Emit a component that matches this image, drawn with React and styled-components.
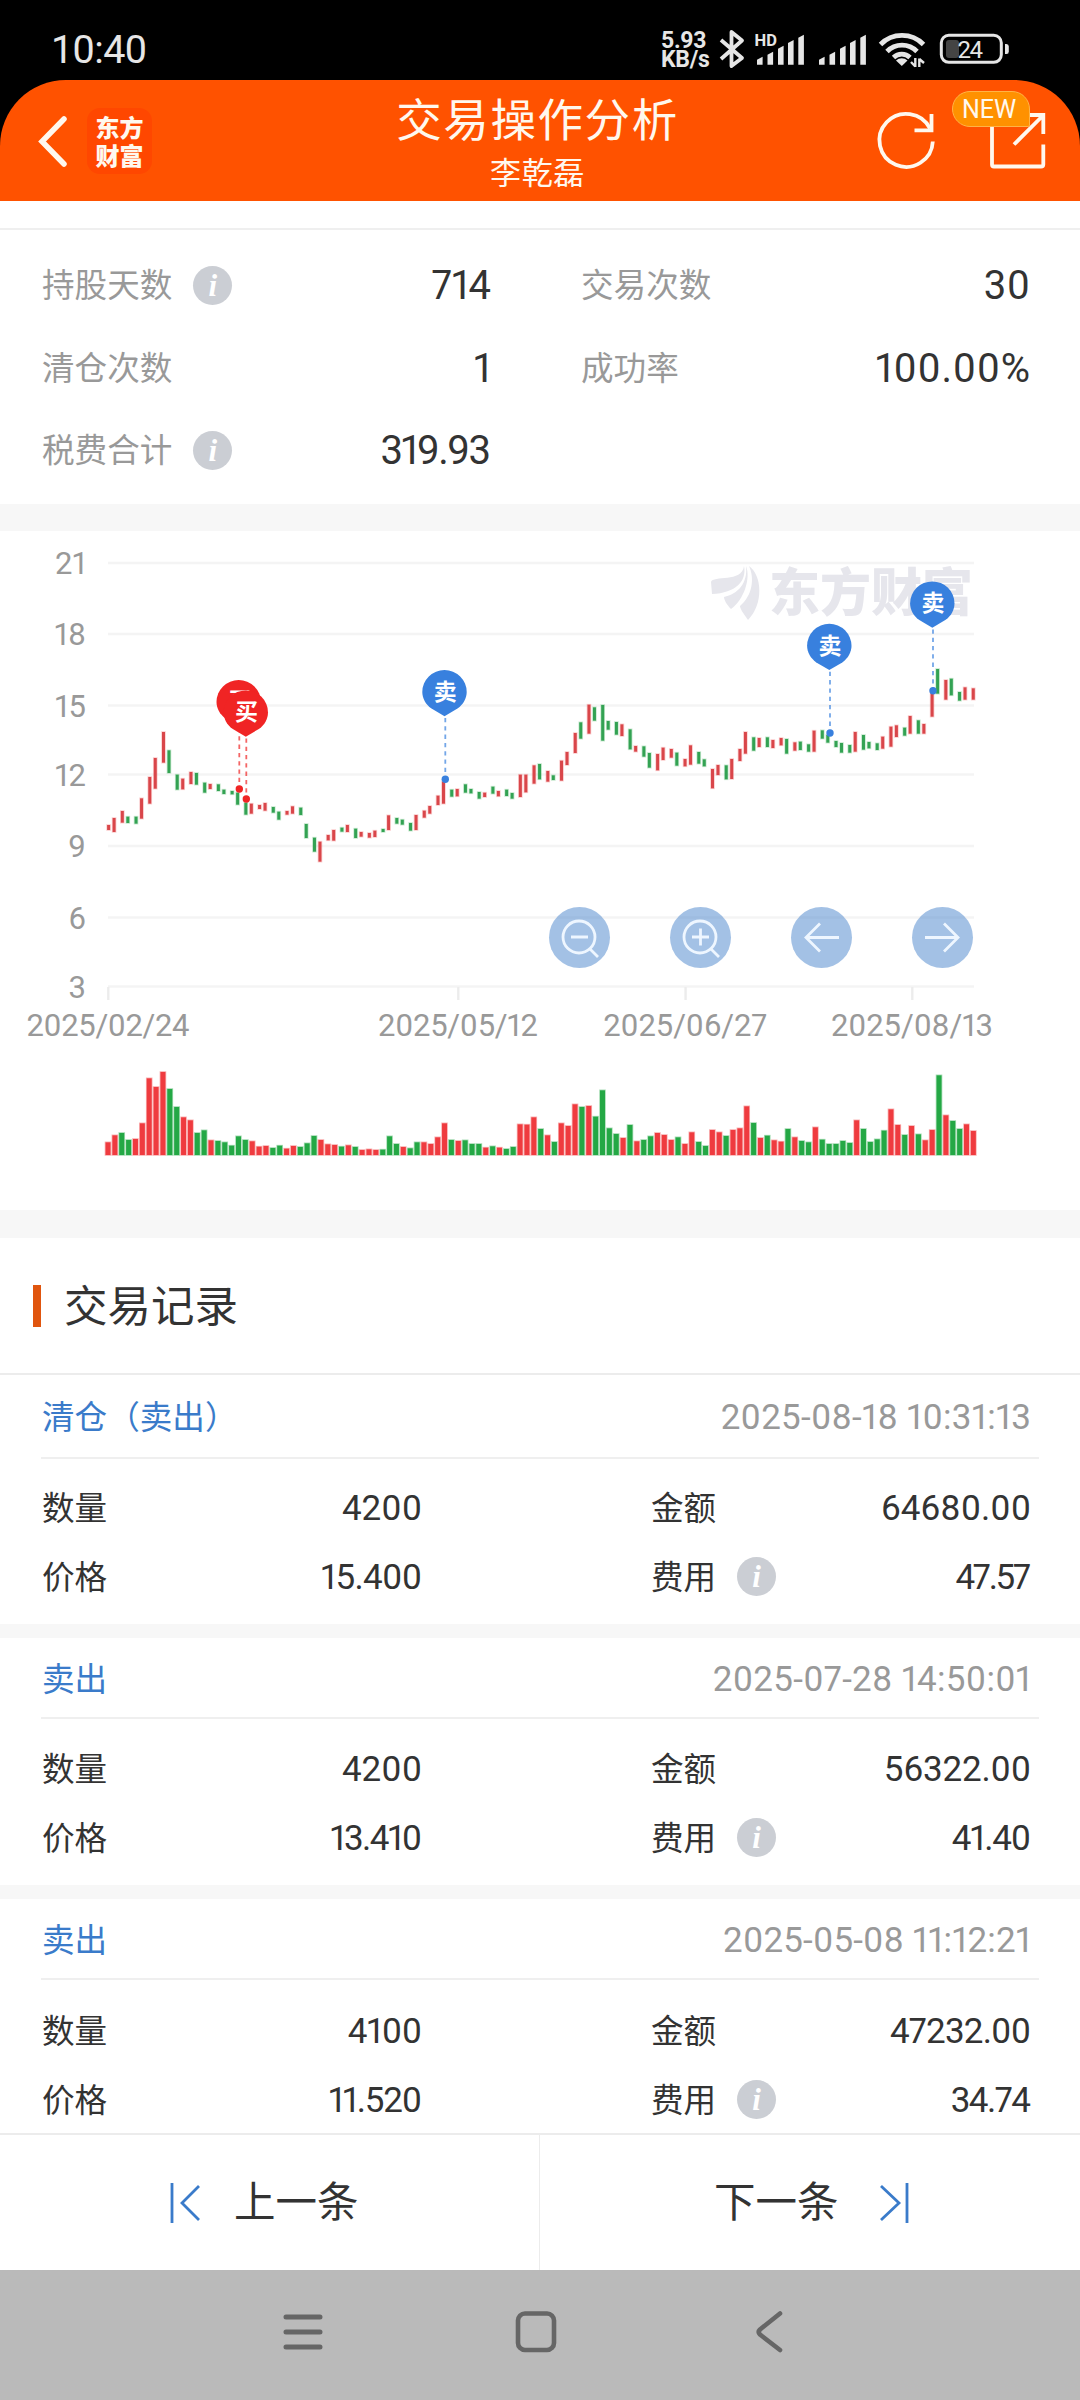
import React from "react";
import styled, { createGlobalStyle } from "styled-components";

const GlobalStyle = createGlobalStyle`
  *, *::before, *::after { box-sizing: border-box; }
  html, body { margin: 0; padding: 0; background: #fff; }
  body { font-family: Roboto, "Noto Sans CJK SC", sans-serif; color: #333; }
`;

const Screen = styled.div`
  display: flex;
  flex-direction: column;
  width: 1080px;
  height: 2400px;
  overflow: hidden;
  background: #fff;
`;

/* ---------- status bar ---------- */
const StatusBar = styled.div`
  display: flex;
  justify-content: space-between;
  height: 80px;
  padding: 0 71px 0 51px;
  background: #000;
  color: #e6e6e6;
`;
const Clock = styled.div`
  padding-top: 27px;
  font-size: 39.5px;
  line-height: 46px;
  letter-spacing: -0.6px;
`;
const StatusIcons = styled.div`
  display: flex;
  height: 80px;
`;
const NetSpeed = styled.div`
  width: 58px;
  padding-top: 31px;
  font-size: 23px;
  line-height: 19px;
  font-weight: 700;
  letter-spacing: -0.3px;
`;

/* ---------- header ---------- */
const HeaderBack = styled.div`
  background: #000;
`;
const Header = styled.header`
  display: grid;
  grid-template-columns: 390px 1fr 390px;
  height: 121px;
  background: #ff5200;
  border-radius: 66px 66px 0 0;
  color: #fff8ee;
`;
const HeaderLeft = styled.div`
  display: flex;
  align-items: center;
  padding-left: 36px;
`;
const BrandTile = styled.div`
  width: 65px;
  height: 66px;
  margin-left: 17px;
  padding-top: 5px;
  border-radius: 13px;
  background: #ff4700;
  font: 900 24px/28px "Noto Sans CJK SC", sans-serif;
  text-align: center;
`;
const HeaderTitles = styled.div`
  display: flex;
  flex-direction: column;
  align-items: center;
  padding: 15px 5px 0 0;
`;
const Title = styled.h1`
  margin: 0;
  font-size: 45.5px;
  font-weight: 400;
  line-height: 54px;
  letter-spacing: 1.6px;
  white-space: nowrap;
`;
const Subtitle = styled.div`
  font-size: 31px;
  line-height: 44px;
  margin-top: 3px;
  letter-spacing: 0.6px;
`;
const HeaderRight = styled.div`
  position: relative;
  display: flex;
  padding-left: 184px;
  gap: 50px;
  padding-top: 29px;
`;
const NewBadge = styled.span`
  position: absolute;
  left: 261.5px;
  top: 11px;
  width: 78px;
  height: 36px;
  border: 1px solid #ffb347;
  border-radius: 18px 18px 2px 18px;
  background: #ff9100;
  font-size: 25px;
  line-height: 35px;
  text-align: center;
  text-indent: -3px;
`;

/* ---------- statistics ---------- */
const Stats = styled.section`
  height: 303px;
  padding-top: 27px;
`;
const StatsGrid = styled.div`
  display: grid;
  grid-template-columns: 449px 449px;
  column-gap: 90px;
  grid-auto-rows: 82.5px;
  height: 276px;
  padding: 14px 0 0 42px;
  border-top: 2px solid #efefef;
`;
const Cell = styled.div`
  display: flex;
  align-items: center;
`;
const Label = styled.span`
  padding-top: 2px;
  font-size: 32.6px;
  line-height: 40px;
  color: ${(p) => (p.$muted ? "#999" : "#333")};
`;
const Value = styled.span`
  margin-left: auto;
  padding-top: 2px;
  font-size: ${(p) => (p.$large ? 40 : 35)}px;
  font-variant-numeric: proportional-nums;
  line-height: 44px;
  letter-spacing: ${(p) => p.$gap || 0}px;
  margin-right: ${(p) => -(p.$gap || 0)}px;
`;
const InfoDot = styled.i`
  display: flex;
  align-items: center;
  justify-content: center;
  width: 39px;
  height: 39px;
  margin-left: 21px;
  border-radius: 50%;
  background: #cbced4;
  color: #fff;
  font: italic 700 31px/39px "Liberation Serif", serif;
`;
const Band = styled.div`
  flex: none;
  height: ${(p) => p.$h}px;
  background: #f7f7f7;
`;

/* ---------- chart ---------- */
const ChartPanel = styled.section`
  position: relative;
  height: 679px;
`;
const ChartControls = styled.div`
  position: absolute;
  left: 549px;
  top: 376px;
  display: flex;
  gap: 60px;
`;
const RoundButton = styled.button`
  display: grid;
  place-items: center;
  width: 61px;
  height: 61px;
  padding: 0;
  border: 0;
  border-radius: 50%;
  background: rgba(72, 132, 203, 0.5);
`;
const AxisText = styled.text`
  fill: #999;
  font-size: 31px;
  font-variant-numeric: proportional-nums;
`;

/* ---------- records ---------- */
const SectionHead = styled.div`
  display: flex;
  align-items: center;
  flex: none;
  height: 137px;
  padding-left: 33px;
  border-bottom: 2px solid #ececec;
`;
const Accent = styled.span`
  width: 8px;
  height: 42px;
  margin-right: 23px;
  background: #e0550e;
`;
const SectionTitle = styled.h2`
  margin: 0;
  padding-top: 4px;
  font-size: 43.5px;
  font-weight: 400;
  line-height: 60px;
`;
const RecordList = styled.div`
  flex: 1;
  min-height: 0;
  overflow: hidden;
`;
const Record = styled.article`
  height: ${(p) => p.$h}px;
`;
const RecordHead = styled.div`
  display: flex;
  align-items: center;
  justify-content: space-between;
  height: ${(p) => p.$h}px;
  margin: 0 41px;
  padding: 4px 8px 0 1px;
  border-bottom: 2px solid #efefef;
`;
const RecordType = styled.span`
  font-size: 32.6px;
  line-height: 40px;
  color: #3a7bca;
`;
const RecordTime = styled.time`
  font-size: 35px;
  line-height: 44px;
  color: #999;
  font-variant-numeric: proportional-nums;
  letter-spacing: ${(p) => p.$gap}px;
  margin-right: ${(p) => -p.$gap}px;
`;
const RecordGrid = styled.div`
  display: grid;
  grid-template-columns: 380px 380px;
  column-gap: 229px;
  grid-auto-rows: 69px;
  padding: ${(p) => p.$top}px 0 0 42px;
`;

/* ---------- pager and system navigation ---------- */
const Pager = styled.div`
  display: grid;
  grid-template-columns: 1fr 1fr;
  flex: none;
  height: 137px;
  border-top: 2px solid #ececec;
  background: #fff;
`;
const PagerButton = styled.button`
  display: flex;
  align-items: center;
  gap: ${(p) => p.$gap}px;
  padding: 0 0 0 ${(p) => p.$start}px;
  border: 0;
  border-right: ${(p) => (p.$divided ? "1px solid #ececec" : "0")};
  background: #fff;
  color: #333;
  font: 400 41.5px/56px Roboto, "Noto Sans CJK SC", sans-serif;
`;
const SystemNav = styled.nav`
  display: flex;
  align-items: center;
  flex: none;
  height: 130px;
  padding: 0 0 6px 280px;
  gap: 187px;
  background: #bababa;
`;

const RED = "#ef3b3f";
const GREEN = "#24a845";

/* high / low of every day, in thirds of a pixel below the chart's reference line */
const CANDLES =
  "555,570r 534,576r 513,548r 530,549g 530,551g 475,536r 411,491r 354,446r 276,368r 331,399g 404,449g 416,448r 396,432r 399,434g 428,458g 432,447r 433,453g 449,462g 453,463g 458,494g 488,524g 491,521r 495,507r 489,512r 501,518g 515,539g 513,524r 499,521r 503,525g 552,594g 593,635g 605,665r 585,601r 570,602r 563,575g 555,576r 566,594g 576,590r 579,593r 572,591r 567,576g 526,570r 534,551g 539,554g 549,572g 525,570r 512,533r 498,521r 467,495r 425,491r 449,470g 447,469r 433,458g 447,460g 456,476g 458,471r 440,461g 453,469r 449,468g 459,476g 404,471r 404,457r 376,431r 372,418g 393,425r 406,420g 362,422r 336,375r 279,339r 247,296g 194,281r 202,242g 195,302g 243,269g 246,284g 253,288r 268,328g 318,335r 319,350g 339,383g 342,391r 323,360r 327,353r 338,377g 357,379r 316,374r 336,371g 358,379g 387,445r 375,405r 376,418g 357,417r 327,363r 276,341r 292,332g 294,321r 292,321g 300,324r 294,316r 297,341g 307,332r 305,330g 313,335g 272,335r 271,296g 285,308g 303,321g 309,338g 315,338g 276,335r 285,329g 306,325g 310,330g 290,326r 260,320r 256,291r 263,287g 228,281r 241,281g 252,281r 155,230r 87,161g 120,179r 116,166g 156,182g 142,179r 145,179r"
    .split(" ")
    .map((s) => {
      const [top, bottom] = s.slice(0, -1).split(",").map(Number);
      return { top: 640 + top / 3, bottom: 640 + bottom / 3, up: s.endsWith("r") };
    });

/* daily volume, bar height in thirds of a pixel */
const VOLUMES =
  "38r 59r 66g 45g 48r 95r 230r 204r 249r 198g 144g 113r 104r 66g 74g 44r 42g 38g 28g 56g 45g 41r 25r 27r 21g 28g 19r 27r 24g 35g 57g 45r 32r 30r 25g 29r 24g 15r 17r 15r 16g 56g 33g 24r 20g 38g 38r 33r 53r 95r 45g 42r 44g 33g 33g 22r 26g 22r 18g 24g 92r 91r 113r 78g 59r 39g 95r 87r 152r 144g 147r 115g 194g 80g 63g 51r 90g 41r 45g 56g 66r 60r 45r 53g 33r 68r 39g 27g 75r 68r 57g 75r 80r 146r 96g 51r 58g 44r 40r 78g 53r 42g 38g 83r 46g 33g 33g 42g 36g 104r 78g 39g 47g 73g 137r 90r 60g 87r 62g 44r 75r 239g 119r 102g 78g 92r 72r"
    .split(" ")
    .map((s) => ({ h: parseInt(s, 10) / 3, up: s.endsWith("r") }));

const LEVELS = [
  [21, 563],
  [18, 634],
  [15, 705.5],
  [12, 774.5],
  [9, 846],
  [6, 917.5],
  [3, 986.5],
];
const DATES = [
  ["2025/02/24", 108, 163],
  ["2025/05/12", 458, 160],
  ["2025/06/27", 685.3, 164],
  ["2025/08/13", 912, 162],
];
const MARKS = [
  { text: "买", x: 238.7, top: 680, dotX: 239.3, dotY: 789, color: "#f02424", lift: 1.3 },
  { text: "买", x: 245.8, top: 690.4, dotX: 246.3, dotY: 799, color: "#f02424", lift: 0.6 },
  { text: "卖", x: 444.5, top: 670, dotX: 445.3, dotY: 779.3, color: "#3880de" },
  { text: "卖", x: 829.3, top: 623.8, dotX: 830, dotY: 733, color: "#3880de" },
  { text: "卖", x: 932.3, top: 581.4, dotX: 933, dotY: 690.8, color: "#3880de" },
];

function Marker({ text, x, top, dotX, dotY, color, lift = 0 }) {
  return (
    <g>
      <line x1={dotX} x2={dotX} y1={top + 48} y2={dotY} stroke={color} strokeOpacity="0.7" strokeWidth="1.8" strokeDasharray="4.3 4" />
      <circle cx={dotX} cy={dotY} r="3.7" fill={color} />
      <path
        d={`M${x} ${top + 46.3} L${x - 13} ${top + 38.6} C${x - 19} ${top + 34.5} ${x - 22.2} ${top + 28} ${x - 22.2} ${top + 22} A22.2 22 0 0 1 ${x + 22.2} ${top + 22} C${x + 22.2} ${top + 28} ${x + 19} ${top + 34.5} ${x + 13} ${top + 38.6} Z`}
        fill={color}
      />
      <text x={x + 0.7} y={top + 30 - lift} fontSize="23" fontWeight="700" fill="#fff" textAnchor="middle">
        {text}
      </text>
    </g>
  );
}

function TradeChart() {
  return (
    <svg width="1080" height="679" viewBox="0 531 1080 679">
      {LEVELS.map(([v, y]) => (
        <g key={v}>
          <line x1="108" x2="974" y1={y} y2={y} stroke="#f4f4f4" strokeWidth="2.6" />
          <AxisText x="86" y={y + 11} textAnchor="end">
            {v}
          </AxisText>
        </g>
      ))}
      {DATES.map(([d, x, w]) => (
        <g key={d}>
          <line x1={x + 0.3} x2={x + 0.3} y1="987" y2="1000" stroke="#ececec" strokeWidth="2.4" />
          <AxisText x={x} y="1035.7" textAnchor="middle" textLength={w}>
            {d}
          </AxisText>
        </g>
      ))}
      <g fill="#e6e6ec">
        <path d="M711 582 C713 575 742 583 744 566 C747 581 736 593 712 594 Z" />
        <path d="M746 566 C751 578 744 600 731 609 C727 605 724 600 724 597 C738 594 748 583 746 566 Z" />
        <path d="M749 566 C762 575 764 604 748 620 C744 614 740 609 740 606 C752 596 755 579 749 566 Z" />
        <text x="769" y="611" fontFamily="Noto Sans CJK SC" fontSize="51" fontWeight="900" textLength="204">
          东方财富
        </text>
      </g>
      {CANDLES.map((c, i) => (
        <rect
          key={i}
          x={107.1 + Math.floor(i * 2.498 + 0.5) * 2.745}
          y={c.top}
          width="3"
          height={c.bottom - c.top}
          fill={c.up ? "#d9464a" : "#33a253"}
          stroke={c.up ? RED : GREEN}
          strokeOpacity="0.25"
          strokeWidth="1.6"
          paintOrder="stroke"
        />
      ))}
      {VOLUMES.map((v, i) => (
        <rect
          key={i}
          x={105.5 + i * 6.868}
          y={1155 - v.h}
          width="5"
          height={v.h}
          fill={v.up ? RED : GREEN}
          stroke={v.up ? RED : GREEN}
          strokeOpacity="0.4"
          strokeWidth="1.6"
          paintOrder="stroke"
        />
      ))}
      {MARKS.map((m, i) => (
        <Marker key={i} {...m} />
      ))}
    </svg>
  );
}

const CONTROLS = [
  <g key="out">
    <circle cx="30" cy="30" r="16" />
    <path d="M22 30H39M41 42L49 50" />
  </g>,
  <g key="in">
    <circle cx="30" cy="30" r="16" />
    <path d="M22 30H39M30.5 21.5V38.5M41 42L49 50" />
  </g>,
  <path key="prev" d="M48 30.5H15M29 16.5L15 30.5L29 44.5" />,
  <path key="next" d="M13 30.5H46M32 16.5L46 30.5L32 44.5" />,
];

function SignalBars({ width, hd }) {
  const xs = [0, 10.5, 21, 31, 41.3];
  const tops = [56.7, 51.7, 45.7, 40, 34.7];
  return (
    <svg width={width} height="80" fill="#e6e6e6">
      {xs.map((x, i) => (
        <path key={i} d={`M${x + 2} 64.7V${tops[i] + 3}L${x + 7.6} ${tops[i]}V64.7Z`} />
      ))}
      {hd && (
        <text x="-0.5" y="45.5" fontSize="16.5" fontWeight="700">
          HD
        </text>
      )}
    </svg>
  );
}

function StatusRow() {
  return (
    <StatusBar>
      <Clock>10:40</Clock>
      <StatusIcons>
        <NetSpeed>
          5.93
          <br />
          KB/s
        </NetSpeed>
        <svg width="36" height="80" viewBox="719 0 36 80" fill="none" stroke="#e6e6e6" strokeWidth="3.8" strokeLinejoin="round">
          <path d="M721 40L742 58L731.5 66V32L742 40.5L721 59" />
        </svg>
        <SignalBars width="62" hd />
        <SignalBars width="61" />
        <svg width="61" height="80" viewBox="878 0 61 80" fill="none" stroke="#e6e6e6" strokeWidth="4.8">
          <path d="M880.5 44.5A30 30 0 0 1 923.5 44.5" />
          <path d="M887 51.5A21 21 0 0 1 917 51.5" />
          <path d="M893.5 57.5A12 12 0 0 1 910 57.5" />
          <path d="M901.8 66L896 60.5A8.5 8.5 0 0 1 907.5 60.5Z" fill="#e6e6e6" stroke="none" />
          <path d="M915.3 58V67M915.3 66.5L911 62M919.3 67V58.5M919.3 59L924 63" strokeWidth="2.4" />
        </svg>
        <svg width="70" height="80" viewBox="939 0 70 80">
          <rect x="941.3" y="35.3" width="60" height="27" rx="7.5" fill="none" stroke="#e6e6e6" strokeWidth="3" />
          <rect x="946" y="40" width="13" height="18" rx="3" fill="#444" />
          <path d="M1005 44h1.5q2.3 0 2.3 2.5v5q0 2.5-2.3 2.5h-1.5Z" fill="#e6e6e6" />
          <text x="957.5" y="57.7" fontSize="24" fill="#e6e6e6" textLength="25.5">
            24
          </text>
        </svg>
      </StatusIcons>
    </StatusBar>
  );
}

function StatCell({ label, value, info, gap }) {
  return (
    <Cell>
      <Label $muted>{label}</Label>
      {info && <InfoDot>i</InfoDot>}
      <Value $large $gap={gap}>
        {value}
      </Value>
    </Cell>
  );
}

const RECORDS = [
  {
    type: "清仓（卖出）",
    time: "2025-08-18 10:31:13",
    gap: 0.25,
    qty: ["4200", 0],
    amount: ["64680.00", 0],
    price: ["15.400", -0.7],
    fee: ["47.57", -2.3],
    h: 249,
    head: 84,
    top: 14,
  },
  {
    type: "卖出",
    time: "2025-07-28 14:50:01",
    gap: 0.28,
    qty: ["4200", 0],
    amount: ["56322.00", -0.2],
    price: ["13.410", -1.5],
    fee: ["41.40", -1.2],
    h: 247,
    head: 81,
    top: 15,
  },
  {
    type: "卖出",
    time: "2025-05-08 11:12:21",
    gap: 0.15,
    qty: ["4100", -0.4],
    amount: ["47232.00", -0.8],
    price: ["11.520", -1.2],
    fee: ["34.74", -1.5],
    h: 247,
    head: 81,
    top: 16,
  },
];

function RecordCell({ label, data, info }) {
  const [value, gap] = data;
  return (
    <Cell>
      <Label>{label}</Label>
      {info && <InfoDot>i</InfoDot>}
      <Value $gap={gap}>{value}</Value>
    </Cell>
  );
}

export default function App() {
  return (
    <Screen>
      <GlobalStyle />
      <StatusRow />
      <HeaderBack>
        <Header>
          <HeaderLeft>
            <svg width="34" height="60" fill="none" stroke="#fff8ee" strokeWidth="5.5" strokeLinecap="round">
              <path d="M28 8L6 30.5L28 53" />
            </svg>
            <BrandTile>
              东方
              <br />
              财富
            </BrandTile>
          </HeaderLeft>
          <HeaderTitles>
            <Title>交易操作分析</Title>
            <Subtitle>李乾磊</Subtitle>
          </HeaderTitles>
          <HeaderRight>
            <svg width="64" height="64" viewBox="874 109 64 64" fill="none" stroke="#fff8ee" strokeWidth="3.8">
              <path d="M932.8 141.5A26.7 26.5 0 1 1 930 128.5" />
              <path d="M931.5 114V130.3H914.5" />
            </svg>
            <svg width="60" height="64" viewBox="988 109 60 64" fill="none" stroke="#fff8ee" strokeWidth="3.8">
              <path d="M992 120V164.5Q992 166.5 994 166.5H1041Q1043.3 166.5 1043.3 164.5V144.5" />
              <path d="M1026 115H1043.3V134M1043 115.5L1014 144.5" />
            </svg>
            <NewBadge>NEW</NewBadge>
          </HeaderRight>
        </Header>
      </HeaderBack>

      <Stats>
        <StatsGrid>
          <StatCell label="持股天数" value="714" info gap={-0.5} />
          <StatCell label="交易次数" value="30" gap={0.5} />
          <StatCell label="清仓次数" value="1" />
          <StatCell label="成功率" value="100.00%" gap={0.7} />
          <StatCell label="税费合计" value="319.93" info gap={-1.6} />
        </StatsGrid>
      </Stats>
      <Band $h={27} />

      <ChartPanel>
        <TradeChart />
        <ChartControls>
          {CONTROLS.map((icon, i) => (
            <RoundButton key={i}>
              <svg width="61" height="61" fill="none" stroke="#eef6ff" strokeWidth="2.8">
                {icon}
              </svg>
            </RoundButton>
          ))}
        </ChartControls>
      </ChartPanel>
      <Band $h={28} />

      <SectionHead>
        <Accent />
        <SectionTitle>交易记录</SectionTitle>
      </SectionHead>
      <RecordList>
        {RECORDS.map((r) => (
          <React.Fragment key={r.time}>
            <Record $h={r.h}>
              <RecordHead $h={r.head}>
                <RecordType>{r.type}</RecordType>
                <RecordTime $gap={r.gap}>{r.time}</RecordTime>
              </RecordHead>
              <RecordGrid $top={r.top}>
                <RecordCell label="数量" data={r.qty} />
                <RecordCell label="金额" data={r.amount} />
                <RecordCell label="价格" data={r.price} />
                <RecordCell label="费用" data={r.fee} info />
              </RecordGrid>
            </Record>
            <Band $h={14} />
          </React.Fragment>
        ))}
      </RecordList>

      <Pager>
        <PagerButton $start={168} $gap={32} $divided>
          <svg width="34" height="42" fill="none" stroke="#3a7bca" strokeWidth="2.8">
            <path d="M4 1V41M31 4L14 21L31 38" />
          </svg>
          上一条
        </PagerButton>
        <PagerButton $start={174} $gap={40}>
          下一条
          <svg width="34" height="42" fill="none" stroke="#3a7bca" strokeWidth="2.8">
            <path d="M28 1V41M2 4L20 21L2 38" />
          </svg>
        </PagerButton>
      </Pager>
      <SystemNav>
        <svg width="46" height="46" stroke="#666" strokeWidth="5" strokeLinecap="round">
          <path d="M6 8H40M6 23H40M6 38H40" />
        </svg>
        <svg width="46" height="46" fill="none" stroke="#666" strokeWidth="4.6">
          <rect x="5" y="4.5" width="36" height="36.5" rx="7" />
        </svg>
        <svg width="46" height="46" fill="none" stroke="#666" strokeWidth="4.6" strokeLinejoin="round" strokeLinecap="round">
          <path d="M34 4.5L14 20.5Q11.5 23 14 25.5L34 41" />
        </svg>
      </SystemNav>
    </Screen>
  );
}
